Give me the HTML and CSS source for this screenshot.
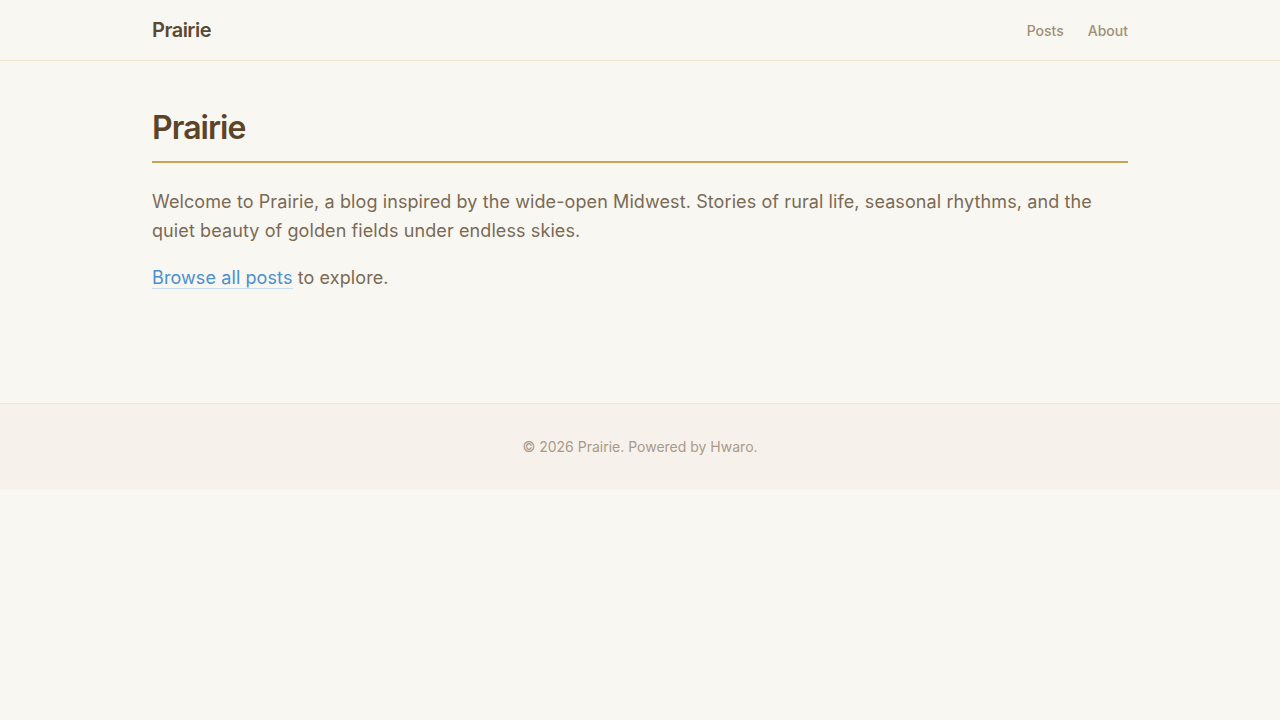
FILE: index.html
```html
<!DOCTYPE html>
<html lang="en">
<head>
    <meta charset="UTF-8">
    <meta name="viewport" content="width=device-width, initial-scale=1.0">
    <title>Prairie</title>
    <link rel="stylesheet" href="styles.css">
</head>
<body>
    <header class="site-header">
        <div class="wrap header-inner">
            <a href="#" class="logo">Prairie</a>
            <nav class="nav">
                <a href="#">Posts</a>
                <a href="#">About</a>
            </nav>
        </div>
    </header>

    <main class="wrap content">
        <h1 class="page-title">Prairie</h1>
        <p>Welcome to Prairie, a blog inspired by the wide-open Midwest. Stories of rural life, seasonal rhythms, and the quiet beauty of golden fields under endless skies.</p>
        <p><a href="#" class="text-link">Browse all posts</a> to explore.</p>
    </main>

    <footer class="site-footer">
        <p>&copy; 2026 Prairie. Powered by Hwaro.</p>
    </footer>
</body>
</html>
```

FILE: styles.css
```css
body {
    font-family: Inter, "Noto Sans", sans-serif;
    background-color: #f9f7f2;
    color: #7a6a55;
    margin: 0;
}
.wrap {
    width: 976px;
    margin: 0 auto;
}
.site-header {
    border-bottom: 1px solid #f0e6cc;
}
.header-inner {
    height: 60px;
    display: flex;
    justify-content: space-between;
    align-items: center;
}
.logo {
    font-size: 20px;
    font-weight: 600;
    letter-spacing: -0.025em;
    color: #5b4932;
    text-decoration: none;
}
.nav {
    display: flex;
    gap: 24px;
}
.nav a {
    font-size: 14px;
    font-weight: 500;
    color: #a08f78;
    text-decoration: none;
}
.content {
    padding: 48px 0 92px;
}
.page-title {
    font-size: 32px;
    font-weight: 600;
    line-height: 1.2;
    letter-spacing: -0.03em;
    color: #5c4429;
    margin: 0 0 25px;
    padding-bottom: 14px;
    border-bottom: 2px solid #c8a550;
}
.content p {
    font-size: 18px;
    line-height: 1.6;
    letter-spacing: 0.1px;
    margin: 0 0 18px;
}
.text-link {
    color: #4a8fd0;
    text-decoration: none;
    border-bottom: 1px solid #c9dcef;
}
.site-footer {
    background: #f6f2eb;
    border-top: 1px solid #ebe3d3;
    padding: 32px 0;
    text-align: center;
}
.site-footer p {
    margin: 0;
    font-size: 14px;
    line-height: 21px;
    color: #a9998a;
}
```
